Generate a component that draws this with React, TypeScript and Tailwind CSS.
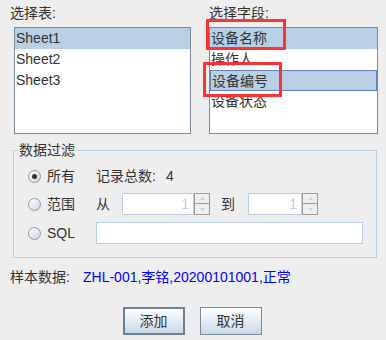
import React from "react";

const font = "font-['Liberation_Sans','Noto_Sans_CJK_SC',sans-serif]";

function ListBox({ items, selected, focused }: { items: string[]; selected: number[]; focused?: number }) {
  return (
    <div className="h-[107px] border border-[#7a8a99] bg-white">
      {items.map((item, i) => (
        <div
          key={item}
          className={
            "h-[21px] leading-[21px] pl-[1px] text-[14px] text-[#333333] " +
            (selected.includes(i) ? "bg-[#b8cfe5] " : "") +
            (focused === i ? "border border-[#6382bf] leading-[19px] pl-[0px]" : "")
          }
        >
          {item}
        </div>
      ))}
    </div>
  );
}

function Radio({ checked, label }: { checked?: boolean; label: string }) {
  return (
    <div className="w-[68px] flex items-center gap-[6px]">
      <span className="size-[13px] rounded-full border border-[#8a97a5] bg-gradient-to-br from-white to-[#c9d6e3] flex items-center justify-center">
        {checked && <span className="size-[5px] rounded-full bg-[#333333]" />}
      </span>
      <span className="text-[14px] text-[#333333]">{label}</span>
    </div>
  );
}

function Spinner({ width }: { width: string }) {
  return (
    <div className="flex h-[22px]">
      <div className={width + " border border-[#b8cfe5] bg-white text-right pr-[4px] text-[14px] leading-[20px] text-[#b8cfe5]"}>1</div>
      <div className="w-[16px] flex flex-col">
        <div className="h-[11px] border border-[#999999] bg-[#eeeeee] flex items-center justify-center">
          <svg viewBox="0 0 6 3" className="w-[5px] h-[3px]">
            <polygon points="0,3 3,0 6,3" fill="#b8cfe5" />
          </svg>
        </div>
        <div className="h-[11px] border border-t-0 border-[#999999] bg-[#eeeeee] flex items-center justify-center">
          <svg viewBox="0 0 6 3" className="w-[5px] h-[3px]">
            <polygon points="0,0 6,0 3,3" fill="#b8cfe5" />
          </svg>
        </div>
      </div>
    </div>
  );
}

export default function App() {
  return (
    <div className={"relative w-[386px] h-[340px] bg-[#eeeeee] overflow-hidden " + font}>
      {/* lists */}
      <div className="flex pt-[4px]">
        <div className="ml-[10px] w-[181px]">
          <div className="h-[18px] leading-[18px] text-[14px] text-[#333333]">选择表:</div>
          <div className="mt-[5px] ml-[4px] w-[177px]">
            <ListBox items={["Sheet1", "Sheet2", "Sheet3"]} selected={[0]} />
          </div>
        </div>
        <div className="ml-[18px] w-[169px]">
          <div className="h-[18px] leading-[18px] text-[14px] text-[#333333]">选择字段:</div>
          <div className="mt-[5px]">
            <ListBox items={["设备名称", "操作人", "设备编号", "设备状态"]} selected={[0, 2]} focused={2} />
          </div>
        </div>
      </div>

      {/* filter group */}
      <div className="relative mt-[16px] ml-[13px] w-[364px] h-[108px] border border-[#b8cfe5] pt-[14px] pl-[14px]">
        <span className="absolute -top-[10px] left-[3px] px-[2px] bg-[#eeeeee] text-[14px] leading-[18px] text-[#333333]">数据过滤</span>
        <div className="flex items-center h-[22px]">
          <Radio checked label="所有" />
          <span className="text-[14px] text-[#333333]">记录总数:</span>
          <span className="ml-[10px] text-[14px] text-[#333333]">4</span>
        </div>
        <div className="flex items-center h-[22px] mt-[6px]">
          <Radio label="范围" />
          <span className="w-[26px] text-[14px] text-[#333333]">从</span>
          <Spinner width="w-[72px]" />
          <span className="ml-[11px] w-[27px] text-[14px] text-[#333333]">到</span>
          <Spinner width="w-[54px]" />
        </div>
        <div className="flex items-center h-[22px] mt-[7px]">
          <Radio label="SQL" />
          <div className="w-[267px] h-[22px] border border-[#b8cfe5] bg-white" />
        </div>
      </div>

      {/* sample */}
      <div className="flex mt-[10px] ml-[10px] h-[18px] leading-[18px] text-[14px]">
        <span className="w-[73px] text-[#333333]">样本数据:</span>
        <span className="text-[#0000ff]">ZHL-001,李铭,20200101001,正常</span>
      </div>

      {/* buttons */}
      <div className="flex justify-center gap-[15px] mt-[21px] pr-[2px]">
        <button className="w-[62px] h-[28px] border-2 border-[#6f7f8f] bg-gradient-to-b from-white to-[#c8d9ea] text-[14px] text-[#333333]">添加</button>
        <button className="w-[62px] h-[28px] border border-[#7a8a99] bg-gradient-to-b from-white to-[#c8d9ea] text-[14px] text-[#333333]">取消</button>
      </div>

      {/* red annotation boxes */}
      <div className="absolute left-[206px] top-[19px] w-[80px] h-[31px] border-[3px] border-[#ff3333]" />
      <div className="absolute left-[203px] top-[62px] w-[79px] h-[35px] border-[3px] border-[#ff3333]" />
    </div>
  );
}
